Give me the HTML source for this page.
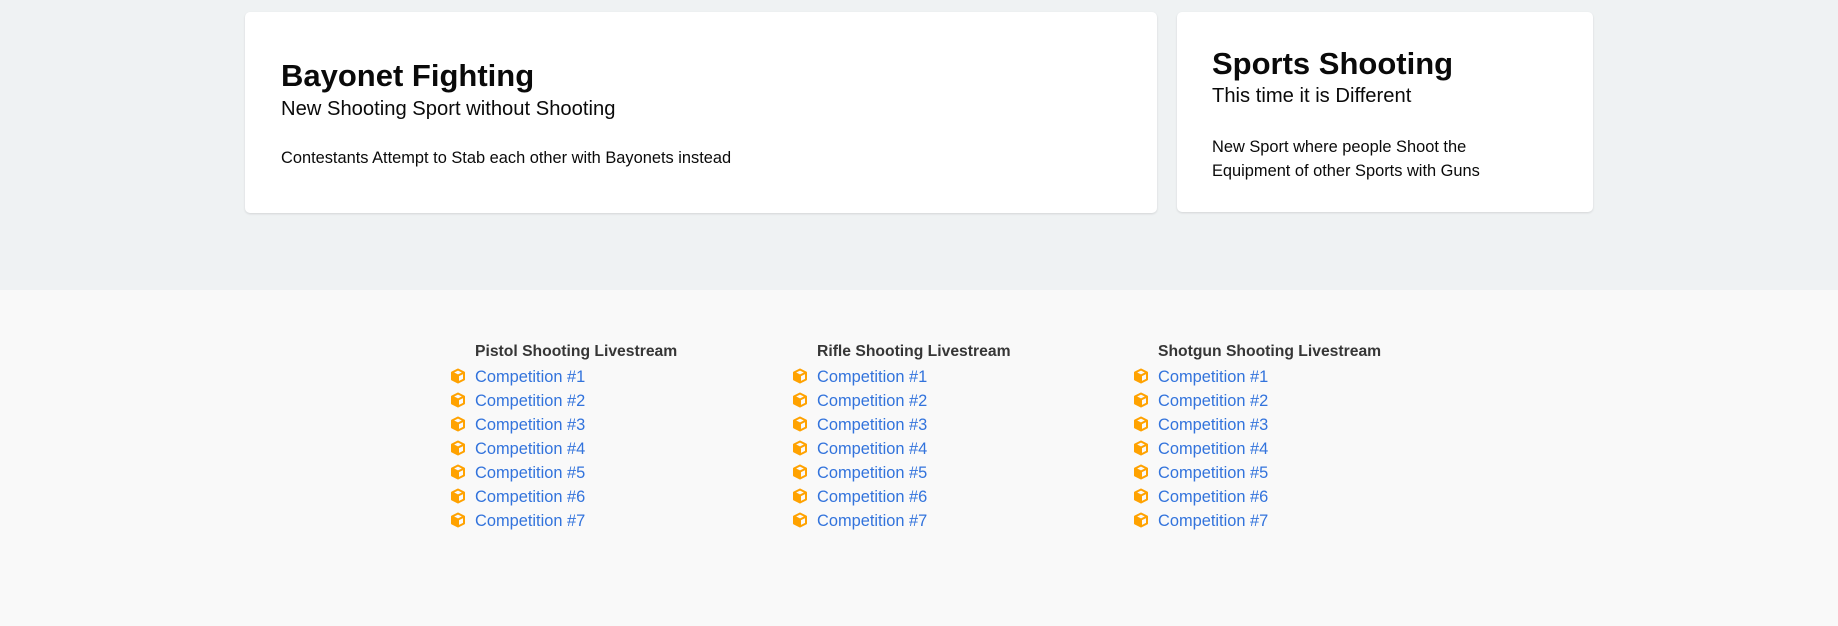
<!DOCTYPE html>
<html><head><style>
body{margin:0;width:1838px;height:626px;background:#f9f9f9;font-family:"Liberation Sans",sans-serif;position:relative;overflow:hidden}
.top{position:absolute;left:0;top:0;width:1838px;height:290px;background:#eff2f3}
.card{position:absolute;background:#fff;border-radius:5px;box-shadow:0 1px 2px rgba(10,10,10,.12)}
.a{position:absolute;white-space:nowrap;color:#0a0a0a}
.t{font-size:31px;font-weight:bold}
.s{font-size:20.2px}
.b{font-size:16.4px}
.h{position:absolute;font-size:15.7px;font-weight:bold;color:#363636}
.l{position:absolute;font-size:16.4px;color:#3273dc;white-space:nowrap}
.i{position:absolute;width:16px;height:16px}
</style></head><body>
<div class="top"></div>
<div class="card" style="left:245px;top:12px;width:912px;height:201px"></div>
<div class="card" style="left:1177px;top:12px;width:416px;height:200px"></div>
<div class="a t" style="left:281px;top:58px">Bayonet Fighting</div>
<div class="a s" style="left:281px;top:98px">New Shooting Sport without Shooting</div>
<div class="a b" style="left:281px;top:149px">Contestants Attempt to Stab each other with Bayonets instead</div>
<div class="a t" style="left:1212px;top:46px">Sports Shooting</div>
<div class="a s" style="left:1212px;top:85px">This time it is Different</div>
<div class="a b" style="left:1212px;top:135px;line-height:24px">New Sport where people Shoot the<br>Equipment of other Sports with Guns</div>
<div id="f"></div>
<script>
var cols=[[450,475,"Pistol Shooting Livestream"],[792,817,"Rifle Shooting Livestream"],[1133,1158,"Shotgun Shooting Livestream"]];
var h="";
var ic='<svg viewBox="0 0 16 16" width="16" height="16"><path d="M8 1.5 14 4.5v7L8 14.5 2 11.5v-7z" fill="none" stroke="#ffa200" stroke-width="2" stroke-linejoin="round"/><path d="M2.5 4.8 8 7.5l5.5-2.7M8 7.5v6.5" fill="none" stroke="#ffa200" stroke-width="2"/><path d="M3 5.5 7.5 8v5.5L3 11.2z" fill="#ffa200"/></svg>';
cols.forEach(function(c){
h+='<div class="h" style="left:'+c[1]+'px;top:343px">'+c[2]+'</div>';
for(var k=0;k<7;k++){var y=368+k*24;
h+='<div class="i" style="left:'+c[0]+'px;top:'+(y)+'px">'+ic+'</div>';
h+='<div class="l" style="left:'+c[1]+'px;top:'+y+'px">Competition #'+(k+1)+'</div>';}
});
document.getElementById("f").innerHTML=h;
</script>
</body></html>
